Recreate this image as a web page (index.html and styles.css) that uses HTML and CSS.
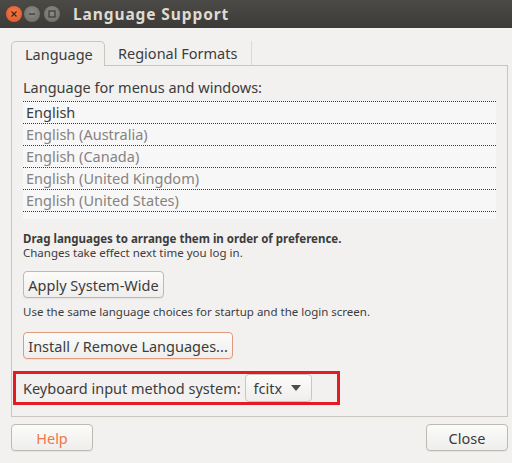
FILE: index.html
```html
<!DOCTYPE html>
<html>
<head>
<meta charset="utf-8">
<link rel="stylesheet" href="styles.css">
</head>
<body>
<div class="window">
  <div class="titlebar">
    <div class="wbtns">
      <span class="wb close"><svg width="8" height="8" viewBox="0 0 8 8"><path d="M1.5 1.5 L6.5 6.5 M6.5 1.5 L1.5 6.5" stroke="#3a2a22" stroke-width="1.3"/></svg></span>
      <span class="wb min"><svg width="8" height="8" viewBox="0 0 8 8"><path d="M1 4 H7" stroke="#3c3b37" stroke-width="1.3"/></svg></span>
      <span class="wb max"><svg width="8" height="8" viewBox="0 0 8 8"><rect x="1" y="1" width="6" height="6" fill="none" stroke="#3c3b37" stroke-width="1.2"/></svg></span>
    </div>
    <div class="title">Language Support</div>
  </div>
  <div class="content">
    <div class="tabs">
      <div class="tab active">Language</div>
      <div class="tab">Regional Formats</div>
      <div class="tabfill"></div>
    </div>
    <div class="panel">
      <div class="label">Language for menus and windows:</div>
      <div class="list">
        <div class="row first">English</div>
        <div class="row dim">English (Australia)</div>
        <div class="row dim">English (Canada)</div>
        <div class="row dim">English (United Kingdom)</div>
        <div class="row dim">English (United States)</div>
      </div>
      <div class="hint">
        <div class="bold">Drag languages to arrange them in order of preference.</div>
        <div>Changes take effect next time you log in.</div>
      </div>
      <div><button class="btn apply">Apply System-Wide</button></div>
      <div class="small">Use the same language choices for startup and the login screen.</div>
      <div><button class="btn install">Install / Remove Languages...</button></div>
      <div class="kbd">
        <span class="kbdlabel">Keyboard input method system:</span>
        <span class="combo">fcitx <svg width="10" height="6" viewBox="0 0 10 6"><path d="M0 0 H10 L5 6 Z" fill="#4c4c4c"/></svg></span>
      </div>
    </div>
    <div class="footer">
      <button class="btn fbtn help">Help</button>
      <button class="btn fbtn">Close</button>
    </div>
  </div>
</div>
</body>
</html>
```
FILE: styles.css
```css
* { box-sizing: border-box; }
html, body { margin: 0; padding: 0; }
body {
  width: 512px;
  height: 463px;
  overflow: hidden;
  background: #f2f1f0;
  font-family: "Noto Sans", "DejaVu Sans", sans-serif;
  color: #3c3c3c;
}
.window { width: 512px; height: 463px; }
.titlebar {
  height: 28px;
  background: linear-gradient(#4b4a46, #3c3b37);
  display: flex;
  align-items: center;
  padding-left: 6px;
}
.wbtns { display: flex; align-items: center; }
.wb {
  width: 16px; height: 16px; border-radius: 50%;
  display: flex; align-items: center; justify-content: center;
}
.min { margin-left: 2px; }
.max { margin-left: 4px; }
.close { background: radial-gradient(circle at 50% 40%, #f37a4c, #e2531f); }
.min, .max { background: radial-gradient(circle at 50% 40%, #8c8a85, #6b6964); }
.title {
  margin-left: 13px;
  color: #dfdbd2;
  font-weight: bold;
  font-size: 15.5px;
  letter-spacing: 0.9px;
}
.content { padding: 13px 4px 0 11px; }
.tabs { display: flex; height: 25px; }
.tab {
  font-size: 14.5px;
  padding: 0 13px;
  display: flex; align-items: center;
  border-bottom: 1px solid #c9c6c0;
  color: #3c3c3c;
  white-space: nowrap;
}
.tab.active {
  width: 94px;
  border: 1px solid #c9c6c0;
  border-bottom: none;
  border-radius: 5px 5px 0 0;
}
.tab:nth-child(2) { width: 147px; border-right: 1px solid #dcdad5; }
.tabfill { flex: 1; border-bottom: 1px solid #c9c6c0; }
.panel {
  height: 351px;
  border: 1px solid #c9c6c0;
  border-top: none;
  padding: 11px 11px 0 11px;
}
.label { font-size: 14.5px; height: 24px; line-height: 20px; color: #3c3c3c; }
.list {
  width: 473px;
  background: #f7f7f7;
  border-top: 1px dotted #3c3c3c;
  padding-bottom: 7px;
}
.row {
  height: 22px;
  font-size: 14.5px;
  line-height: 21px;
  padding-left: 3px;
  border-bottom: 1px dotted #3c3c3c;
  color: #3c3c3c;
}
.row.dim { color: #868381; }
.hint { font-size: 11.5px; line-height: 14px; margin-top: 13px; color: #3c3c3c; }
.bold { font-weight: bold; }
.btn {
  font-family: inherit;
  font-size: 14.5px;
  color: #3c3c3c;
  background: linear-gradient(#fbfbfa, #efeeec);
  border: 1px solid #bdbab4;
  border-radius: 4px;
  height: 27px;
  padding: 0 4px;
  white-space: nowrap;
  box-shadow: 0 1px 0 rgba(0,0,0,0.05);
}
.apply { margin-top: 11px; width: 141px; }
.small { font-size: 11.5px; margin-top: 6px; height: 16px; line-height: 16px; color: #3c3c3c; }
.install { margin-top: 12px; width: 210px; border-color: #e39a7c; }
.kbd {
  margin: 12px 0 0 -10px;
  width: 327px;
  height: 34px;
  border: 3px solid #e31c24;
  display: flex;
  align-items: center;
  padding-left: 7px;
}
.kbdlabel { font-size: 14.5px; color: #3c3c3c; white-space: nowrap; }
.combo {
  margin-left: 4px;
  height: 28px;
  width: 67px;
  flex: none;
  border: 1px solid #c9c6c0;
  border-radius: 4px;
  background: linear-gradient(#fbfbfa, #efeeec);
  display: flex; align-items: center;
  font-size: 14.5px;
  padding-left: 8px;
  gap: 9px;
}
.footer {
  display: flex;
  justify-content: space-between;
  margin-top: 7px;
}
.fbtn { width: 82px; height: 27px; }
.help { color: #f07746; }
```
